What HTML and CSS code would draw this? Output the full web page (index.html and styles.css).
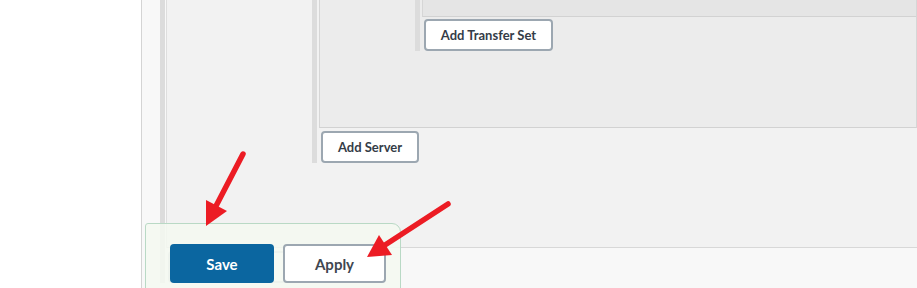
FILE: index.html
```html
<!DOCTYPE html>
<html lang="en">
<head>
<meta charset="utf-8">
<title>Server configuration</title>
<link rel="stylesheet" href="styles.css">
</head>
<body>
<div class="shell">
  <div class="group group-outer">
    <div class="bar"></div>
    <div class="col">
      <div class="box box-outer">
        <div class="group group-server">
          <div class="bar"></div>
          <div class="col">
            <div class="box box-server">
              <div class="group group-transfer">
                <div class="bar"></div>
                <div class="col">
                  <div class="box box-transfer"></div>
                  <button class="btn btn-add btn-transfer">Add Transfer Set</button>
                </div>
              </div>
            </div>
            <button class="btn btn-add btn-server">Add Server</button>
          </div>
        </div>
      </div>
      <div class="btn-placeholder"></div>
    </div>
  </div>
</div>

<div class="footer">
  <button class="btn btn-save">Save</button>
  <button class="btn btn-apply">Apply</button>
</div>

<svg class="arrows" width="917" height="288" viewBox="0 0 917 288" aria-hidden="true">
  <g fill="#ec1c24" stroke="#ec1c24">
    <line x1="243" y1="154" x2="216" y2="206" stroke-width="5.5" stroke-linecap="round"/>
    <polygon points="206,226 206,200 227,211" stroke="none"/>
    <line x1="448" y1="204" x2="385" y2="245" stroke-width="5.5" stroke-linecap="round"/>
    <polygon points="367,257 379,235 392,255" stroke="none"/>
  </g>
</svg>
</body>
</html>
```

FILE: styles.css
```css
* { box-sizing: border-box; }

html, body {
  margin: 0;
  padding: 0;
}

body {
  position: relative;
  width: 917px;
  height: 288px;
  overflow: hidden;
  background: #ffffff;
  font-family: Lato, "Liberation Sans", sans-serif;
}

.shell {
  margin-left: 141px;
  height: 288px;
  border-left: 1px solid #d4d4d4;
  background: #f8f8f8;
  padding-left: 18px;
}

.group {
  display: flex;
  align-items: flex-start;
}

.bar {
  flex: 0 0 5px;
  width: 5px;
  align-self: stretch;
  background: #dcdcdc;
}

.col {
  flex: 1 1 auto;
  display: flex;
  flex-direction: column;
  align-items: flex-start;
  margin-left: 2px;
}

.group-outer > .col { margin-left: 1px; }

.box {
  width: 100%;
}

.box-outer {
  height: 248px;
  background: #f2f2f2;
  border-left: 1px solid #dedede;
  border-bottom: 1px solid #d8d8d8;
  padding-left: 145px;
}

.box-server {
  height: 128px;
  background: #ececec;
  border-left: 1px solid #d6d6d6;
  border-right: 1px solid #d6d6d6;
  border-bottom: 1px solid #d2d2d2;
  padding-left: 95px;
}

.box-transfer {
  height: 17px;
  background: #e5e5e5;
  border-left: 1px solid #d6d6d6;
  border-bottom: 1px solid #d2d2d2;
}

.btn {
  font-family: inherit;
  font-weight: 700;
  border-radius: 4px;
  white-space: nowrap;
  padding: 0;
  cursor: pointer;
}

.btn-add {
  height: 32px;
  margin-left: 2px;
  background: #ffffff;
  border: 2px solid #9ca7b1;
  color: #343c47;
  font-size: 13px;
}

.btn-transfer {
  margin-top: 2px;
  width: 129px;
}

.btn-server {
  margin-top: 3px;
  width: 98px;
}

.btn-placeholder {
  margin-top: 3px;
  margin-left: 2px;
  width: 150px;
  height: 32px;
  border: 2px solid #c9cfd4;
  border-radius: 4px;
  background: #ffffff;
}

.footer {
  position: absolute;
  left: 145px;
  top: 223px;
  width: 256px;
  height: 80px;
  display: flex;
  align-items: flex-start;
  gap: 9px;
  padding: 20px 0 0 24px;
  background: rgba(244, 249, 241, 0.85);
  border: 1px solid #b9d9c5;
  border-radius: 3px 9px 0 0;
}

.btn-save {
  width: 104px;
  height: 39px;
  background: #0b66a0;
  border: 0;
  color: #ffffff;
  font-size: 15px;
}

.btn-apply {
  width: 103px;
  height: 39px;
  background: #ffffff;
  border: 2px solid #9ca7b1;
  color: #3f4650;
  font-size: 15px;
}

.arrows {
  position: absolute;
  left: 0;
  top: 0;
  pointer-events: none;
}
```
